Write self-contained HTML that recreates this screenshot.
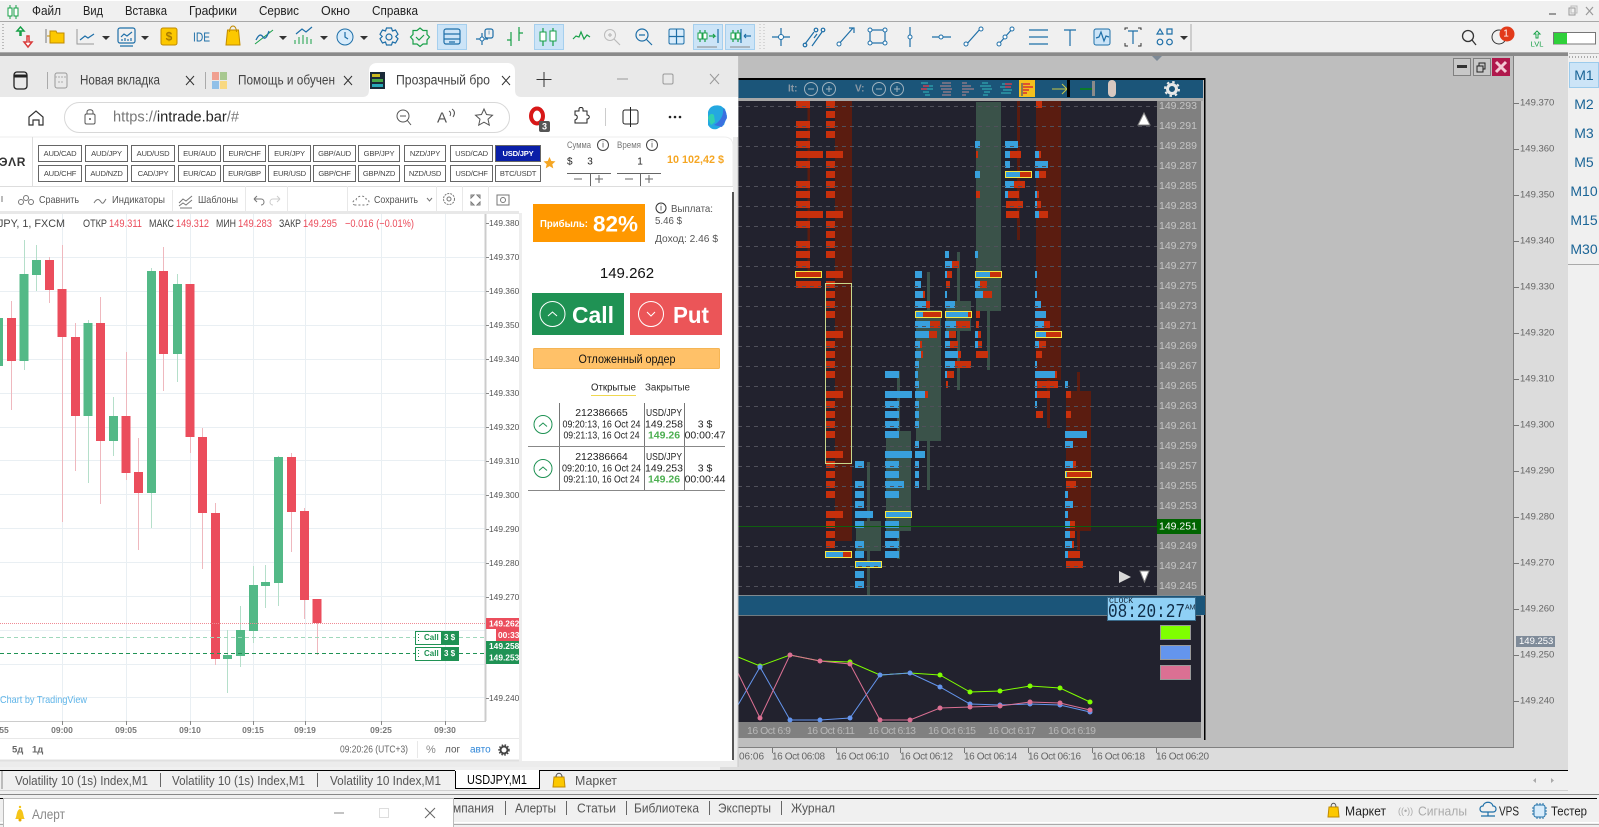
<!DOCTYPE html>
<html><head><meta charset="utf-8"><title>Chart</title>
<style>
html,body{margin:0;padding:0;width:1599px;height:827px;overflow:hidden;background:#f0f0f0}
svg{display:block;position:absolute;left:0;top:0}
text{font-family:"Liberation Sans",sans-serif;dominant-baseline:central}
.m{font-size:12.5px;fill:#222}
.pr{font-size:10.5px;fill:#c4c4c4}
.ax{font-size:9.5px;fill:#666}
.axt{font-size:8.4px;fill:#555}
.dt{font-size:10px;fill:#666}
.bd{font-size:10.5px;fill:#b8b8b8}
.tb{font-size:13px;fill:#555}
.p{font-size:7.6px;fill:#444;text-anchor:middle;letter-spacing:-.2px}
.tv{font-size:10.5px;fill:#555}
.lg{font-size:11px;fill:#444}
.lr{font-size:11px;fill:#eb4d5c}
.tp{font-size:9.5px;fill:#666}
.tm{font-size:8.5px;fill:#777;text-anchor:middle;font-weight:bold}
.tt{font-size:10.5px;fill:#222;text-anchor:middle}
.i{fill:none;stroke:#1e6fa8;stroke-width:1.2}
.g{fill:none;stroke:#18a048;stroke-width:1.2}
</style></head><body>
<svg width="1599" height="827" viewBox="0 0 1599 827">
<rect width="1599" height="827" fill="#f0f0f0"/>
<!-- menu -->
<rect y="21" width="1599" height="1" fill="#a8a8a8"/>
<rect y="0" width="1599" height="1" fill="#fff"/>
<path d="M10 5v14M16 5v14" stroke="#18a048" stroke-width="1" fill="none"/><rect x="8" y="8" width="4" height="8" fill="#fff" stroke="#18a048"/><rect x="14" y="8" width="4" height="8" fill="#fff" stroke="#18a048"/>
<text class="m" x="32" y="11" textLength="29" lengthAdjust="spacingAndGlyphs">Файл</text>
<text class="m" x="83" y="11" textLength="20" lengthAdjust="spacingAndGlyphs">Вид</text>
<text class="m" x="125" y="11" textLength="42" lengthAdjust="spacingAndGlyphs">Вставка</text>
<text class="m" x="189" y="11" textLength="48" lengthAdjust="spacingAndGlyphs">Графики</text>
<text class="m" x="259" y="11" textLength="40" lengthAdjust="spacingAndGlyphs">Сервис</text>
<text class="m" x="321" y="11" textLength="29" lengthAdjust="spacingAndGlyphs">Окно</text>
<text class="m" x="372" y="11" textLength="46" lengthAdjust="spacingAndGlyphs">Справка</text>
<path d="M1549 14h7" stroke="#999" stroke-width="2"/><rect x="1569" y="8" width="6" height="7" fill="none" stroke="#999"/><rect x="1571" y="6" width="6" height="7" fill="none" stroke="#bbb"/><path d="M1586 7l7 8M1593 7l-7 8" stroke="#999" stroke-width="1.2"/>
<!-- toolbar -->
<rect y="52" width="1568" height="1" fill="#aaa"/>
<rect y="53" width="1568" height="3" fill="#8a8a8a"/>
<path d="M3 24v26" stroke="#bbb" stroke-dasharray="1 2" stroke-width="2"/>
<g fill="#cce4f7" stroke="#a5cfee"><rect x="437.5" y="24.5" width="29" height="25"/><rect x="534.5" y="24.5" width="29" height="25"/><rect x="693.5" y="24.5" width="29" height="25"/><rect x="725.5" y="24.5" width="29" height="25"/></g>
<path d="M20 36v-5h-3l3.5-4 3.5 4h-3v5" fill="#fff" stroke="#18a048" stroke-width="1.5"/><path d="M27 36v6h-3l4 5 4-5h-3v-6z" fill="#fff" stroke="#d93a3a" stroke-width="1.5"/>
<path d="M46 29v14" stroke="#777"/><path d="M47 36h3M50 31h6l1 2h7v10H50z" fill="#fcc800" stroke="#c08a00"/>
<path d="M77 29v15h17" fill="none" stroke="#999"/><path d="M80 40l5-4 3 2 6-4" class="i"/><path d="M102 36h8l-4 4z" fill="#333"/>
<rect x="118" y="28" width="17" height="15" rx="2" class="i"/><path d="M121 37l3-3 3 2 5-4M122 41v-2M125 41v-3M128 41v-2M131 41v-3M120 46h13" class="i" stroke-width="1"/><path d="M141 36h8l-4 4z" fill="#333"/>
<rect x="161" y="28" width="16" height="17" rx="2" fill="#fcc800" stroke="#c08a00"/><text x="169" y="36.5" font-size="12" font-weight="bold" fill="#a87a00" text-anchor="middle">$</text>
<text x="193" y="37" font-size="13" fill="#1e6fa8" textLength="17" lengthAdjust="spacingAndGlyphs">IDE</text>
<path d="M226 45l1.5-15h11l1.5 15z" fill="#fcc800" stroke="#c08a00"/><path d="M229.5 32c0-8 7-8 7 0" fill="none" stroke="#c08a00"/>
<path d="M255 44l18-14" stroke="#18a048"/><path d="M256 40c3-6 5-6 7-3s4 0 6-6" fill="none" stroke="#1e6fa8" stroke-width="1.3"/><path d="M279 36h8l-4 4z" fill="#333"/>
<path d="M295 44v-4M299 44v-7M303 44v-9M307 44v-7M311 44v-5" stroke="#18a048" fill="none"/><path d="M296 34l6-5 4 3 6-5" class="i"/><path d="M320 36h8l-4 4z" fill="#333"/>
<circle cx="345" cy="37" r="8" fill="#d8ecfb" stroke="#1e6fa8"/><path d="M345 32v5l3 2" class="i" stroke-width="1"/><path d="M360 36h8l-4 4z" fill="#333"/>
<path d="M386.5 28h5l1 3 3-1 2.5 4.300-2.200 2.200 2.200 2.200-2.500 4.300-3-1-1 3h-5l-1-3-3 1-2.500-4.300 2.200-2.200-2.200-2.200 2.500-4.300 3 1z" class="i"/><circle cx="389" cy="37" r="3" class="i"/>
<path d="M420 28l3 2.5h4v4l2.5 2.5-2.500 3v4h-4l-3 2.500-3-2.500h-4v-4l-2.500-3 2.500-2.500v-4h4z" class="g"/><path d="M416 37l3 3 5-5" class="g"/>
<rect x="444" y="29" width="16" height="15" rx="2" class="i"/><path d="M444 34h16M444 39h16M449 42h6" class="i"/>
<path d="M482 33v12M476 39h12" class="i" stroke-width="1.3"/><circle cx="482" cy="39" r="2" fill="#fff" stroke="#1e6fa8"/><rect x="485" y="29" width="8" height="9" rx="2" class="i"/><text x="489" y="33" font-size="7" fill="#1e6fa8" text-anchor="middle">i</text>
<path d="M511 32v14M507 40h4M519 27v14M519 33h4" class="g"/>
<path d="M543 28v18M553 28v18" class="g"/><rect x="540" y="32" width="6" height="9" fill="#fff" stroke="#18a048"/><rect x="550" y="31" width="6" height="10" fill="#fff" stroke="#18a048"/>
<path d="M573 39l3-3 3 1 2-5 3 7 3-4 3 2" class="g"/>
<circle cx="610" cy="35" r="5.5" fill="none" stroke="#bbb"/><path d="M608 35h4M610 33v4M614 39l6 6" stroke="#bbb" fill="none" stroke-width="1.2"/>
<circle cx="642" cy="35" r="6" class="i"/><path d="M639 35h6M646 39l6 6" class="i"/>
<rect x="669" y="29" width="15" height="15" rx="1.5" fill="#d8ecfb" stroke="#1e6fa8"/><path d="M676.5 29v15M669 36.5h15" class="i"/>
<path d="M700 30v12M705 30v12" class="g"/><rect x="698" y="33" width="4" height="6" fill="#fff" stroke="#18a048"/><rect x="703" y="33" width="4" height="6" fill="#fff" stroke="#18a048"/><path d="M709 36h6l-2-2M715 36l-2 2" class="g"/><path d="M718 29v14" class="i"/><path d="M697 47h20" stroke="#888" fill="none"/>
<path d="M733 30v12M738 30v12" class="g"/><rect x="731" y="33" width="4" height="6" fill="#fff" stroke="#18a048"/><rect x="736" y="33" width="4" height="6" fill="#fff" stroke="#18a048"/><path d="M741 29v14" class="i"/><path d="M744 36h7M744 36l2-2M744 36l2 2" class="i"/><path d="M730 47h20" stroke="#888" fill="none"/>
<path d="M760 24v27M764 24v27" stroke="#bbb" fill="none" stroke-dasharray="1 2"/>
<path d="M781 28v18M772 37h18" class="i"/><circle cx="781" cy="37" r="2.5" fill="#fff" stroke="#1e6fa8"/>
<path d="M805 44l9-12M812 46l10-14M814 38l3-4" class="i"/><circle cx="816" cy="30" r="1.8" class="i"/><circle cx="823" cy="30" r="1.800" class="i"/><circle cx="805" cy="45" r="1.800" class="i"/>
<path d="M838 45l15-17M849 28h5v5" class="i"/><circle cx="839" cy="44" r="2" fill="#fff" stroke="#1e6fa8"/>
<rect x="870" y="30" width="15" height="13" class="i"/><g fill="#fff" stroke="#1e6fa8"><circle cx="870" cy="30" r="2"/><circle cx="885" cy="30" r="2"/><circle cx="870" cy="43" r="2"/><circle cx="885" cy="43" r="2"/></g>
<path d="M910 27v20" class="i"/><circle cx="910" cy="37" r="2" fill="#fff" stroke="#1e6fa8"/>
<path d="M932 37h19" class="i"/><circle cx="941" cy="37" r="2" fill="#fff" stroke="#1e6fa8"/>
<path d="M965 46l16-18" class="i"/><circle cx="981" cy="29" r="2" fill="#fff" stroke="#1e6fa8"/><circle cx="966" cy="44" r="2" fill="#fff" stroke="#1e6fa8"/>
<path d="M998 45l15-17" class="i"/><circle cx="1012" cy="29" r="2" fill="#fff" stroke="#1e6fa8"/><circle cx="1005" cy="37" r="2" fill="#fff" stroke="#1e6fa8"/><circle cx="999" cy="44" r="2" fill="#fff" stroke="#1e6fa8"/>
<path d="M1029 30h19M1029 37h19M1029 44h19" class="i"/>
<path d="M1064 30h12M1070 30v16" class="i"/>
<rect x="1094" y="29" width="16" height="16" rx="2" fill="#cce4f7" stroke="#1e6fa8"/><path d="M1096 38l3-1 2-5 3 9 2-5 3 1" class="i"/>
<path d="M1125 30v-2h3M1138 28h3v2M1125 43v3h3M1138 46h3v-3" stroke="#333" fill="none"/><path d="M1128 31h10M1133 31v13" class="i"/>
<path d="M1157 34l3-5 3 5zM1167 29h5v5h-5z" class="i" fill="none"/><circle cx="1160" cy="42" r="2.8" class="i"/><circle cx="1169.5" cy="42" r="2.8" class="i"/><path d="M1180 36h8l-4 4z" fill="#333"/>
<path d="M1191 24v27" stroke="#aaa"/>
<circle cx="1468" cy="36" r="5.5" fill="none" stroke="#333" stroke-width="1.3"/><path d="M1472 40l4 5" stroke="#333" stroke-width="1.3"/>
<circle cx="1499" cy="37" r="7" fill="none" stroke="#333"/><circle cx="1507" cy="34" r="7.5" fill="#e23a1a"/><text x="1506" y="34" font-size="10" fill="#fff" text-anchor="middle">1</text>
<path d="M1537 31l-3 3h2v4h2v-4h2z" fill="#fff" stroke="#18a048"/><text x="1537" y="44" font-size="7.5" fill="#18a048" text-anchor="middle">LVL</text>
<rect x="1553.5" y="32.5" width="42" height="11.5" fill="#fff" stroke="#777"/><rect x="1554" y="33" width="13" height="11" fill="#2fd03a"/>
<!-- right panel -->
<rect x="1568" y="53" width="31" height="212" fill="#f0f0f0"/><path d="M1569 53.5h30" stroke="#bbb"/><path d="M1569 57h30" stroke="#aaa" stroke-dasharray="1 2" stroke-width="2"/>
<rect x="1569.5" y="62.5" width="29" height="25" fill="#cce4f7" stroke="#9ccbec"/>
<g font-size="14" fill="#1a6496" text-anchor="middle"><text x="1584" y="75">M1</text><text x="1584" y="104">M2</text><text x="1584" y="133">M3</text><text x="1584" y="162">M5</text><text x="1584" y="191">M10</text><text x="1584" y="220">M15</text><text x="1584" y="249">M30</text></g>
<path d="M1568 264.5h31" stroke="#aaa"/>
<!-- MDI -->
<rect x="720" y="56" width="848" height="714" fill="#dcdcdc"/>
<rect x="720" y="56" width="793" height="691" fill="#bebebe"/>
<path d="M720 747.5h794M1513.5 56v692" stroke="#808080" fill="none"/>
<path d="M1152 56h10l-5 5z" fill="#7d8a97"/>
<rect x="1453.5" y="58.5" width="17" height="17" fill="#c8c8c8" stroke="#808080"/><rect x="1457" y="65" width="10" height="3" fill="#333"/>
<rect x="1473.5" y="58.5" width="17" height="17" fill="#c8c8c8" stroke="#808080"/><rect x="1479" y="63" width="6" height="6" fill="none" stroke="#222"/><rect x="1477" y="66" width="6" height="6" fill="#c8c8c8" stroke="#222"/>
<rect x="1492" y="58" width="18" height="18" fill="#b0184c"/><path d="M1496 62l10 10M1506 62l-10 10" stroke="#f3c9d5" stroke-width="3"/>
<path d="M1514 103.500h5M1514 149.500h5M1514 195.500h5M1514 241.500h5M1514 287.500h5M1514 333.500h5M1514 379.500h5M1514 425.500h5M1514 471.500h5M1514 517.500h5M1514 563.500h5M1514 609.500h5M1514 655.500h5M1514 701.500h5" stroke="#777" fill="none"/>
<text class="ax" x="1520" y="103">149.370</text><text class="ax" x="1520" y="149">149.360</text><text class="ax" x="1520" y="195">149.350</text><text class="ax" x="1520" y="241">149.340</text><text class="ax" x="1520" y="287">149.330</text><text class="ax" x="1520" y="333">149.320</text><text class="ax" x="1520" y="379">149.310</text><text class="ax" x="1520" y="425">149.300</text><text class="ax" x="1520" y="471">149.290</text><text class="ax" x="1520" y="517">149.280</text><text class="ax" x="1520" y="563">149.270</text><text class="ax" x="1520" y="609">149.260</text><text class="ax" x="1520" y="701">149.240</text><text class="ax" x="1520" y="655">149.250</text>
<rect x="1516" y="636" width="39" height="11" fill="#7f8b99"/><text x="1519" y="641.5" font-size="9.5" fill="#fff">149.253</text>
<path d="M772.5 748v5M836.5 748v5M900.5 748v5M964.5 748v5M1028.5 748v5M1092.5 748v5M1156.5 748v5" stroke="#777"/>
<text class="dt" x="739" y="757">06:06</text><text class="dt" x="772" y="757" textLength="53">16 Oct 06:08</text><text class="dt" x="836" y="757" textLength="53">16 Oct 06:10</text><text class="dt" x="900" y="757" textLength="53">16 Oct 06:12</text><text class="dt" x="964" y="757" textLength="53">16 Oct 06:14</text><text class="dt" x="1028" y="757" textLength="53">16 Oct 06:16</text><text class="dt" x="1092" y="757" textLength="53">16 Oct 06:18</text><text class="dt" x="1156" y="757" textLength="53">16 Oct 06:20</text>
<!-- dark chart -->
<rect x="738" y="78" width="467" height="2" fill="#000"/>
<rect x="1204" y="78" width="1.5" height="662" fill="#000"/>
<rect x="738" y="80" width="465" height="18" fill="#1b5579"/>
<rect x="738" y="98" width="465" height="3" fill="#a8a8a8"/>
<rect x="738" y="101" width="463" height="494" fill="#22222e"/>
<rect x="1157" y="101" width="44" height="494" fill="#808080"/>
<!-- candles -->
<g fill="#5a1c10"><rect x="807.5" y="101" width="2.5" height="170"/><rect x="835" y="101" width="17" height="440"/><rect x="1017" y="101" width="3" height="139"/><rect x="1036" y="101" width="25" height="279"/><rect x="1047" y="380" width="3" height="48"/><rect x="1066" y="391" width="25" height="140"/><rect x="1077" y="372" width="3" height="178"/></g>
<g fill="#3a5249"><rect x="856" y="521" width="25" height="30"/><rect x="867" y="462" width="3" height="133"/><rect x="886" y="431" width="25" height="100"/><rect x="897" y="371" width="3" height="188"/><rect x="916" y="310" width="25" height="131"/><rect x="927" y="272" width="3" height="218"/><rect x="946" y="301" width="25" height="30"/><rect x="957" y="252" width="3" height="138"/><rect x="976" y="102" width="25" height="209"/><rect x="987" y="311" width="3" height="59"/></g>
<!-- red cells -->
<path fill="none" stroke="#c8300c" stroke-width="7" d="M796 104.5h14M796 124.5h14M796 134.5h14M796 144.5h14M796 154.5h27M796 164.5h14M796 184.5h14M796 194.5h14M796 204.5h14M796 214.5h27M796 224.5h14M796 244.5h14M796 254.5h14M796 264.5h14M796 274.5h26M796 284.5h25
M826 104.5h9M826 114.5h9M826 124.5h9M826 134.5h9M826 154.5h17M826 164.5h9M826 174.5h9M826 184.5h9M826 194.5h9M826 214.5h17M826 224.5h9M826 234.5h9M826 244.5h9M826 254.5h9M826 274.5h17M826 284.5h9M826 294.5h9M826 304.5h9M826 314.5h9M826 334.5h17M826 344.5h9M826 354.5h9M826 364.5h9M826 374.5h9M826 394.5h17M826 404.5h9M826 414.5h9M826 424.5h9M826 434.5h9M826 454.5h17M826 464.5h9M826 474.5h9M826 484.5h9M826 494.5h9M826 514.5h17M826 524.5h9M826 534.5h9M826 544.5h9M843 554.5h9
M923 294.5h2M926 304.5h4M923 314.5h18M930 324.5h10M929 334.5h8M920 344.5h2M921 354.5h2M925 394.5h3
M952 264.5h7M947 274.5h5M946 284.5h4M968 314.5h3M956 324.5h14M949 334.5h7M950 344.5h8M958 354.5h3M955 364.5h16M947 374.5h7M946 384.5h2
M976 154.5h2M976 194.5h4M990 274.5h11M980 284.5h7M983 294.5h9M976 314.5h4M976 324.5h3M978 334.5h3M978 344.5h4M976 354.5h12
M1010 154.5h11M1020 174.5h11M1014 184.5h11M1008 194.5h11M1006 204.5h17M1006 214.5h13
M1036 104.5h6M1039 154.5h2M1039 174.5h7M1037 194.5h2M1037 204.5h4M1039 214.5h9M1044 324.5h6M1046 334.5h15M1039 344.5h7M1036 354.5h6M1055 374.5h2M1037 384.5h21M1037 394.5h13M1036 414.5h7
M1066 394.5h5M1066 414.5h5M1073 464.5h3M1067 474.5h24M1066 484.5h10M1070 524.5h5M1070 534.5h5M1072 544.5h2M1068 554.5h12M1066 564.5h17"/>
<!-- blue cells -->
<path fill="none" stroke="#38a0dd" stroke-width="7" d="M826 554.5h17
M855 464.5h9M855 484.5h9M855 494.5h9M855 504.5h9M855 514.5h18M855 524.5h9M855 544.5h9M855 554.5h9M855 564.5h26M855 574.5h9M855 584.5h9
M885 374.5h14M885 394.5h27M885 404.5h14M885 414.5h14M885 424.5h14M885 434.5h14M885 454.5h27M885 464.5h14M885 474.5h14M885 484.5h19M885 494.5h14M885 514.5h26M885 524.5h14M885 534.5h14M885 544.5h14M885 554.5h14
M915 274.5h7M915 284.5h6M915 294.5h8M915 304.5h11M915 314.5h8M915 324.5h15M915 334.5h14M915 344.5h5M915 354.5h6M915 364.5h4M915 374.5h3M915 384.5h4M915 394.5h10M915 404.5h4M915 414.5h4M915 424.5h4M915 444.5h4M915 454.5h10M915 464.5h4M915 474.5h4M915 484.5h4
M945 254.5h4M945 264.5h7M945 274.5h2M945 294.5h2M945 304.5h10M945 314.5h23M945 324.5h11M945 334.5h4M945 344.5h5M945 354.5h13M945 364.5h10M945 374.5h2
M975 144.5h5M975 174.5h5M975 254.5h3M975 274.5h15M975 284.5h5M975 294.5h8M975 334.5h3M975 344.5h3
M1005 144.5h13M1005 154.5h5M1005 164.5h5M1005 174.5h15M1005 184.5h9M1005 194.5h3
M1035 154.5h4M1035 164.5h13M1035 174.5h4M1035 194.5h2M1035 204.5h2M1035 214.5h4M1035 274.5h2M1035 294.5h2M1035 304.5h6M1035 314.5h11M1035 324.5h9M1035 334.5h11M1035 344.5h4M1035 364.5h2M1035 374.5h20M1035 384.5h2M1035 394.5h2M1035 404.5h2
M1065 384.5h3M1065 434.5h22M1065 444.5h8M1065 464.5h8M1065 474.5h2M1065 494.5h3M1065 504.5h8M1065 514.5h3M1065 524.5h5M1065 534.5h5M1065 544.5h7M1065 554.5h3"/>
<!-- dashed -->
<path fill="none" stroke="#50505a" stroke-dasharray="4 4" d="M738 106.5h419M738 126.5h419M738 146.5h419M738 166.5h419M738 186.5h419M738 206.5h419M738 226.5h419M738 246.5h419M738 266.5h419M738 286.5h419M738 306.5h419M738 326.5h419M738 346.5h419M738 366.5h419M738 386.5h419M738 406.5h419M738 426.5h419M738 446.5h419M738 466.5h419M738 486.5h419M738 506.5h419M738 546.5h419M738 566.5h419M738 586.5h419"/>
<path d="M738 526.5h419" stroke="#0f5e0f"/>
<!-- yellow boxes -->
<g fill="none" stroke="#f5e642"><rect x="795.5" y="271.5" width="26" height="6"/><rect x="825.5" y="551.5" width="26" height="6"/><rect x="855.5" y="561.5" width="26" height="6"/><rect x="885.5" y="511.5" width="26" height="6"/><rect x="915.5" y="311.5" width="26" height="6"/><rect x="945.5" y="311.5" width="26" height="6"/><rect x="975.5" y="271.5" width="26" height="6"/><rect x="1005.5" y="171.5" width="26" height="6"/><rect x="1035.5" y="331.5" width="26" height="6"/><rect x="1065.5" y="471.5" width="26" height="6"/></g>
<rect x="825.5" y="283.5" width="26" height="180" fill="none" stroke="#c8d88c"/>
<!-- price col -->
<text class="pr" x="1159" y="106">149.293</text><text class="pr" x="1159" y="126">149.291</text><text class="pr" x="1159" y="146">149.289</text><text class="pr" x="1159" y="166">149.287</text><text class="pr" x="1159" y="186">149.285</text><text class="pr" x="1159" y="206">149.283</text><text class="pr" x="1159" y="226">149.281</text><text class="pr" x="1159" y="246">149.279</text><text class="pr" x="1159" y="266">149.277</text><text class="pr" x="1159" y="286">149.275</text><text class="pr" x="1159" y="306">149.273</text><text class="pr" x="1159" y="326">149.271</text><text class="pr" x="1159" y="346">149.269</text><text class="pr" x="1159" y="366">149.267</text><text class="pr" x="1159" y="386">149.265</text><text class="pr" x="1159" y="406">149.263</text><text class="pr" x="1159" y="426">149.261</text><text class="pr" x="1159" y="446">149.259</text><text class="pr" x="1159" y="466">149.257</text><text class="pr" x="1159" y="486">149.255</text><text class="pr" x="1159" y="506">149.253</text><text class="pr" x="1159" y="546">149.249</text><text class="pr" x="1159" y="566">149.247</text><text class="pr" x="1159" y="586">149.245</text>
<rect x="1157" y="519" width="44" height="15" fill="#006400"/><text x="1159" y="526.5" font-size="10.5" fill="#fff">149.251</text>
<path d="M1144 113l6 12h-12z" fill="#fff" stroke="#888"/><path d="M1119 571l12 6-12 6z" fill="#d8d8d8"/><path d="M1140 571h9l-4.500 11z" fill="#fff" stroke="#888"/>
<!-- chart header -->
<text x="788" y="89" font-size="10" font-weight="bold" fill="#8a98a4">It:</text>
<g fill="none" stroke="#9fb2bf"><circle cx="811" cy="89" r="6.5"/><circle cx="829" cy="89" r="6.5"/><circle cx="879" cy="89" r="6.5"/><circle cx="897" cy="89" r="6.5"/><path d="M808 89h6M826 89h6M829 86v6M876 89h6M894 89h6M897 86v6"/></g>
<text x="855" y="89" font-size="10" font-weight="bold" fill="#8a98a4">V:</text>
<rect x="1019" y="80" width="16" height="17" fill="#f4c01e"/>
<g stroke-width="1.5" fill="none"><path d="M921 83h7M923 86h10M921 89h12M923 92h6M925 95h5" stroke="#2c9aa8"/><path d="M923 86h6M921 89h6" stroke="#c8364c"/><path d="M942 83h9M940 86h11M941 89h11M943 92h8M942 95h9" stroke="#8a7a88"/><path d="M962 83h5M962 86h9M962 89h12M962 92h7M962 95h4" stroke="#8a7a88"/><path d="M982 83h6M980 86h11M982 89h10M984 92h6M983 95h5" stroke="#2c9aa8"/><path d="M1002 84h9M1000 87h11M1003 90h9M1001 93h10" stroke="#2c9aa8"/><path d="M1005 84h7M1005 87h6" stroke="#c8364c"/><path d="M1022 83v13" stroke="#666"/><path d="M1023 84h7M1023 87h10M1023 90h6M1023 93h4" stroke="#d83030"/></g>
<path d="M1052 89h15M1062 84l5 5-5 5" fill="none" stroke="#c8c848"/><rect x="1067" y="80" width="3" height="17" fill="#000"/>
<path d="M1080 89h12" stroke="#0a7a2a" stroke-width="2"/><rect x="1092" y="81" width="3" height="15" fill="#8a8a8a"/>
<rect x="1108" y="80" width="8" height="17" rx="4" fill="#d8c8c0"/>
<circle cx="1172" cy="89" r="4.5" fill="none" stroke="#e8e8e8" stroke-width="3"/><circle cx="1172" cy="89" r="7" fill="none" stroke="#e8e8e8" stroke-width="2" stroke-dasharray="2.500 3"/>
<!-- lower panels -->
<rect x="738" y="595" width="467" height="1" fill="#808a90"/>
<rect x="738" y="596" width="467" height="19" fill="#1b5579"/>
<rect x="738" y="615" width="463" height="1" fill="#707a80"/>
<rect x="738" y="616" width="463" height="106" fill="#22222e"/>
<rect x="738" y="722" width="463" height="16" fill="#808080"/>
<rect x="1107.5" y="597.5" width="88" height="23" fill="#8fd0f5" stroke="#3a6a8a"/>
<text x="1109" y="601.5" font-size="8" fill="#123" style="font-family:'Liberation Mono',monospace">CLOCK</text>
<text x="1108" y="612" font-size="19" fill="#0e2a44" textLength="77" lengthAdjust="spacingAndGlyphs" style="font-family:'Liberation Mono',monospace">08:20:27</text>
<text x="1185" y="608" font-size="7" fill="#123">AM</text>
<g stroke="#999"><rect x="1160.5" y="625.5" width="30" height="14" fill="#7fff00"/><rect x="1160.5" y="645.5" width="30" height="14" fill="#6495ed"/><rect x="1160.5" y="665.5" width="30" height="14" fill="#db7093"/></g>
<polyline fill="none" stroke="#7fff00" points="738,657 760,666 790,655 820,661 850,662 880,675 910,673 940,675 970,692 1000,691 1030,686 1060,688 1090,702"/>
<polyline fill="none" stroke="#6495ed" points="738,705 760,667 790,720 820,720 850,718 880,675 910,673 940,687 970,704 1000,705 1030,704 1060,705 1090,712"/>
<polyline fill="none" stroke="#db7093" points="738,673 760,718 790,655 820,661 850,664 880,720 910,720 940,708 970,707 1000,706 1030,702 1060,703 1090,710"/>
<g fill="#7fff00"><circle cx="760" cy="666" r="2.5"/><circle cx="850" cy="662" r="2.5"/><circle cx="940" cy="675" r="2.5"/><circle cx="970" cy="692" r="2.5"/><circle cx="1000" cy="691" r="2.5"/><circle cx="1030" cy="686" r="2.5"/><circle cx="1060" cy="688" r="2.5"/><circle cx="1090" cy="702" r="2.5"/></g>
<g fill="#6495ed"><circle cx="760" cy="667" r="2.5"/><circle cx="790" cy="720" r="2.5"/><circle cx="820" cy="720" r="2.5"/><circle cx="850" cy="718" r="2.5"/><circle cx="880" cy="675" r="2.5"/><circle cx="910" cy="673" r="2.5"/><circle cx="940" cy="687" r="2.5"/><circle cx="970" cy="704" r="2.5"/><circle cx="1000" cy="705" r="2.5"/><circle cx="1030" cy="704" r="2.5"/><circle cx="1060" cy="705" r="2.5"/><circle cx="1090" cy="712" r="2.5"/></g>
<g fill="#db7093"><circle cx="760" cy="718" r="2.5"/><circle cx="790" cy="655" r="2.5"/><circle cx="820" cy="661" r="2.5"/><circle cx="850" cy="664" r="2.5"/><circle cx="880" cy="720" r="2.5"/><circle cx="910" cy="720" r="2.5"/><circle cx="940" cy="708" r="2.5"/><circle cx="970" cy="707" r="2.5"/><circle cx="1000" cy="706" r="2.5"/><circle cx="1030" cy="702" r="2.5"/><circle cx="1060" cy="703" r="2.5"/><circle cx="1090" cy="710" r="2.5"/></g>
<text class="bd" x="747" y="731" textLength="44">16 Oct 6:9</text><text class="bd" x="807" y="731" textLength="48">16 Oct 6:11</text><text class="bd" x="868" y="731" textLength="48">16 Oct 6:13</text><text class="bd" x="928" y="731" textLength="48">16 Oct 6:15</text><text class="bd" x="988" y="731" textLength="48">16 Oct 6:17</text><text class="bd" x="1048" y="731" textLength="48">16 Oct 6:19</text>
<!-- bottom tabs -->
<rect y="770" width="1568" height="1.5" fill="#000"/>
<rect y="771" width="1568" height="19" fill="#f0f0f0"/>
<rect y="790" width="1568" height="1" fill="#d0d0d0"/>
<path d="M2 771v18" stroke="#888"/>
<rect x="455" y="770" width="84" height="18" fill="#fff"/><path d="M455.5 770v18.5h84V770" fill="none" stroke="#000"/>
<rect x="455" y="770" width="84" height="1" fill="#fff"/>
<text class="tb" x="15" y="780.5" textLength="133" lengthAdjust="spacingAndGlyphs">Volatility 10 (1s) Index,M1</text>
<path d="M160.5 773v14M317.5 773v14" stroke="#666"/>
<text class="tb" x="172" y="780.5" textLength="133" lengthAdjust="spacingAndGlyphs">Volatility 10 (1s) Index,M1</text>
<text class="tb" x="330" y="780.5" textLength="111" lengthAdjust="spacingAndGlyphs">Volatility 10 Index,M1</text>
<text x="467" y="779.5" font-size="13" fill="#000" textLength="60" lengthAdjust="spacingAndGlyphs">USDJPY,M1</text>
<path d="M553 787l1-10h10l1 10z" fill="#fcc800" stroke="#c08a00"/><path d="M556 777c0-5 6-5 6 0" fill="none" stroke="#555"/>
<text class="tb" x="575" y="780.5" textLength="42" lengthAdjust="spacingAndGlyphs">Маркет</text>
<path d="M1536 778l-3 2.5 3 2.5zM1551 778l3 2.5-3 2.5z" fill="#aaa"/>
<rect y="794" width="1599" height="1" fill="#888"/>
<rect y="798" width="1597" height="1" fill="#000"/>
<rect y="799" width="1597" height="23" fill="#f0f0f0"/>
<rect y="822" width="1599" height="1" fill="#fff"/>
<rect y="824" width="1599" height="1" fill="#aaa"/>
<text class="tb" x="453" y="808" textLength="41" lengthAdjust="spacingAndGlyphs">мпания</text>
<path d="M505.5 801v14" stroke="#666"/>
<text class="tb" x="515" y="808" textLength="41" lengthAdjust="spacingAndGlyphs">Алерты</text>
<path d="M566.5 801v14" stroke="#666"/>
<text class="tb" x="577" y="808" textLength="39" lengthAdjust="spacingAndGlyphs">Статьи</text>
<path d="M626.5 801v14" stroke="#666"/>
<text class="tb" x="634" y="808" textLength="65" lengthAdjust="spacingAndGlyphs">Библиотека</text>
<path d="M709.5 801v14" stroke="#666"/>
<text class="tb" x="718" y="808" textLength="53" lengthAdjust="spacingAndGlyphs">Эксперты</text>
<path d="M781.5 801v14" stroke="#666"/>
<text class="tb" x="791" y="808" textLength="44" lengthAdjust="spacingAndGlyphs">Журнал</text>
<path d="M1328 817l1-10h9l1 10z" fill="#fcc800" stroke="#c08a00"/><path d="M1331 807c0-5 5-5 5 0" fill="none" stroke="#555"/>
<text x="1345" y="811" font-size="13" fill="#222" textLength="41" lengthAdjust="spacingAndGlyphs">Маркет</text>
<text x="1398" y="811" font-size="9" fill="#aaa">((•))</text>
<text x="1418" y="811" font-size="13" fill="#aaa" textLength="49" lengthAdjust="spacingAndGlyphs">Сигналы</text>
<path d="M1483 812c-4 0-4-6 0-6 1-5 9-5 10 0 4 0 4 6 0 6zM1488 812v4M1481 816h14" class="i"/>
<text x="1499" y="811" font-size="13" fill="#222" textLength="20" lengthAdjust="spacingAndGlyphs">VPS</text>
<rect x="1534" y="805" width="11" height="12" rx="2" fill="#d8ecfb" stroke="#1e6fa8"/><path d="M1532 808h2M1532 811h2M1532 814h2M1545 808h2M1545 811h2M1545 814h2M1537 803v2M1540 803v2M1543 803v2M1537 817v2M1540 817v2M1543 817v2" stroke="#1e6fa8" fill="none"/>
<text x="1551" y="811" font-size="13" fill="#222" textLength="36" lengthAdjust="spacingAndGlyphs">Тестер</text>
<!-- browser window -->
<rect x="0" y="56" width="738" height="711" fill="#ececec"/>
<path d="M738 56v711" stroke="#c8c8c8"/>
<rect x="0" y="56" width="738" height="41" fill="#e9e9e9"/>
<path d="M362 97c6 0 7-3 7-8V71c0-5 3-8 8-8h130c5 0 8 3 8 8v18c0 5 1 8 7 8z" fill="#fff"/>
<rect x="0" y="97" width="738" height="40" fill="#fff"/>
<rect x="0" y="137" width="733" height="624" fill="#fff"/>
<rect x="14" y="72" width="13" height="17" rx="3" fill="none" stroke="#222" stroke-width="1.3"/><path d="M14 76h13" stroke="#222" stroke-width="3"/>
<path d="M47.5 72v17M205.5 72v17" stroke="#aaa"/>
<rect x="55" y="73" width="12" height="15" rx="2" fill="none" stroke="#999"/><path d="M55 77h12M58 82h6" stroke="#aaa" stroke-dasharray="2 1" fill="none"/>
<g font-size="13.5" fill="#444"><text x="80" y="80" textLength="80" lengthAdjust="spacingAndGlyphs">Новая вкладка</text><text x="238" y="80" textLength="97" lengthAdjust="spacingAndGlyphs">Помощь и обучен</text><text x="396" y="80" textLength="94" lengthAdjust="spacingAndGlyphs">Прозрачный бро</text></g>
<path d="M186 76l8 9M194 76l-8 9M344 76l8 9M352 76l-8 9M502 76l8 9M510 76l-8 9" stroke="#333" fill="none"/>
<rect x="212" y="72" width="7" height="8" fill="#f0a090"/><rect x="220" y="72" width="7" height="8" fill="#a8c890"/><rect x="212" y="81" width="7" height="8" fill="#90c0e8"/><rect x="220" y="81" width="7" height="8" fill="#f8d880"/>
<rect x="370" y="72" width="15" height="17" fill="#1a2a38"/><rect x="372" y="74" width="8" height="3" fill="#c8b820"/><rect x="372" y="79" width="11" height="3" fill="#48a848"/><rect x="372" y="84" width="11" height="3" fill="#28a8b8"/>
<path d="M544 72v15M536.5 79.5h15" stroke="#333" fill="none"/>
<path d="M617 79h11" stroke="#999"/><rect x="663" y="74" width="10" height="10" rx="1.5" fill="none" stroke="#999"/><path d="M710 74l9 10M719 74l-9 10" stroke="#999" fill="none"/>
<path d="M29 117l7-6 7 6v8h-4v-5h-6v5h-4z" fill="none" stroke="#333" stroke-width="1.2"/>
<rect x="64.5" y="102.5" width="445" height="30" rx="15" fill="#fff" stroke="#d8d8d8"/>
<rect x="85" y="114" width="10" height="10" rx="1.5" fill="none" stroke="#555"/><path d="M87 114v-2c0-3 6-3 6 0v2" fill="none" stroke="#555"/><circle cx="90" cy="119" r="1" fill="#555"/>
<text x="113" y="117.5" font-size="14.5" fill="#777" textLength="126" lengthAdjust="spacingAndGlyphs">https://<tspan fill="#222">intrade.bar</tspan>/#</text>
<circle cx="403" cy="116" r="6" fill="none" stroke="#555"/><path d="M400 116h6M407 120l4 5" stroke="#555" fill="none"/>
<text x="437" y="118" font-size="15" fill="#555">A</text><path d="M449 111c2 1 2 3 1 5M452 109c3 2 3 5 1 8" fill="none" stroke="#555"/>
<path d="M484 109l2.5 5.500 6 .7-4.500 4 1.300 6-5.300-3-5.300 3 1.300-6-4.500-4 6-.7z" fill="none" stroke="#555"/>
<ellipse cx="537" cy="116" rx="6" ry="7.5" fill="none" stroke="#d81818" stroke-width="4"/><rect x="539" y="121" width="11" height="11" rx="2" fill="#555"/><text x="544.5" y="126.5" font-size="9" fill="#fff" text-anchor="middle" font-weight="bold">3</text>
<path d="M575 111h4v-2c0-2 4-2 4 0v2h4v4c3 0 3 4 0 4v4h-12v-3c3-1 3-5 0-5z" fill="none" stroke="#222"/>
<path d="M605.5 108v18" stroke="#ccc"/>
<rect x="623" y="110" width="15" height="14" rx="2" fill="none" stroke="#222"/><path d="M630.5 107v20" stroke="#222"/><rect x="631" y="111" width="6" height="12" fill="#fff"/>
<g fill="#222"><circle cx="670" cy="117" r="1.3"/><circle cx="675" cy="117" r="1.3"/><circle cx="680" cy="117" r="1.3"/></g>
<path d="M708 112c2-8 10-7 13-6l4 3 2 7-3 9-7 4c-5 1-7-1-9-4z" fill="#24a8e0"/><path d="M714 125c5-3 10-8 9-17l3 4 1 6-5 9z" fill="#3a70e0"/><path d="M708 118c1-4 4-5 6-3l1 7-4 3z" fill="#30d0b0"/>
<path d="M0 137h724c6 0 9 3 9 9v40" fill="none" stroke="#eee"/>
<!-- toolbar content -->
<text x="-1" y="162" font-size="12" fill="#333" font-weight="bold" letter-spacing=".6">ЭΛR</text>
<path d="M32.5 137v49" stroke="#ddd"/>
<g fill="#fff" stroke="#666"><rect x="38.5" y="145.5" width="43" height="16"/><rect x="85.5" y="145.5" width="42" height="16"/><rect x="131.5" y="145.5" width="43" height="16"/><rect x="178.5" y="145.5" width="42" height="16"/><rect x="223.5" y="145.5" width="42" height="16"/><rect x="268.5" y="145.5" width="42" height="16"/><rect x="313.5" y="145.5" width="42" height="16"/><rect x="358.5" y="145.5" width="41" height="16"/><rect x="404.5" y="145.5" width="41" height="16"/><rect x="450.5" y="145.5" width="42" height="16"/><rect x="495.5" y="145.5" width="45" height="16" fill="#0a1fa8"/>
<rect x="38.5" y="165.5" width="43" height="16"/><rect x="85.5" y="165.5" width="42" height="16"/><rect x="131.5" y="165.5" width="43" height="16"/><rect x="178.5" y="165.5" width="42" height="16"/><rect x="223.5" y="165.5" width="42" height="16"/><rect x="268.5" y="165.5" width="42" height="16"/><rect x="313.5" y="165.5" width="42" height="16"/><rect x="358.5" y="165.5" width="41" height="16"/><rect x="404.5" y="165.5" width="41" height="16"/><rect x="450.5" y="165.5" width="42" height="16"/><rect x="495.5" y="165.5" width="45" height="16"/></g>
<text class="p" x="60" y="153.5">AUD/CAD</text><text class="p" x="106.5" y="153.5">AUD/JPY</text><text class="p" x="153" y="153.5">AUD/USD</text><text class="p" x="199.5" y="153.5">EUR/AUD</text><text class="p" x="244.5" y="153.5">EUR/CHF</text><text class="p" x="289.5" y="153.5">EUR/JPY</text><text class="p" x="334.5" y="153.5">GBP/AUD</text><text class="p" x="379" y="153.5">GBP/JPY</text><text class="p" x="425" y="153.5">NZD/JPY</text><text class="p" x="471.5" y="153.5">USD/CAD</text><text class="p" x="518" y="153.5" style="fill:#fff;font-weight:bold">USD/JPY</text>
<text class="p" x="60" y="173.5">AUD/CHF</text><text class="p" x="106.5" y="173.5">AUD/NZD</text><text class="p" x="153" y="173.5">CAD/JPY</text><text class="p" x="199.5" y="173.5">EUR/CAD</text><text class="p" x="244.5" y="173.5">EUR/GBP</text><text class="p" x="289.5" y="173.5">EUR/USD</text><text class="p" x="334.5" y="173.5">GBP/CHF</text><text class="p" x="379" y="173.5">GBP/NZD</text><text class="p" x="425" y="173.5">NZD/USD</text><text class="p" x="471.5" y="173.5">USD/CHF</text><text class="p" x="518" y="173.5">BTC/USDT</text>
<path d="M549.5 157l1.800 4 4.200.4-3.200 2.800 1 4.200-3.800-2.300-3.800 2.300 1-4.200-3.200-2.800 4.200-.4z" fill="#f5a623"/>
<text x="567" y="145" font-size="9" fill="#777" textLength="24" lengthAdjust="spacingAndGlyphs">Сумма</text><text x="617" y="145" font-size="9" fill="#777" textLength="24" lengthAdjust="spacingAndGlyphs">Время</text>
<circle cx="603" cy="145" r="5.5" fill="none" stroke="#444"/><text x="603" y="145" font-size="8" fill="#444" text-anchor="middle">i</text><circle cx="652" cy="145" r="5.5" fill="none" stroke="#444"/><text x="652" y="145" font-size="8" fill="#444" text-anchor="middle">i</text>
<text x="567" y="162" font-size="10" fill="#222">$</text><text x="590" y="162" font-size="10" fill="#222" text-anchor="middle">3</text><text x="640" y="162" font-size="10" fill="#222" text-anchor="middle">1</text>
<path d="M567 173.5h44M617 173.5h44M590.5 174v12M640.5 174v12" stroke="#666" fill="none"/>
<path d="M574 179h8M595 179h8M599 175v8M625 179h8M645 179h8M649 175v8" stroke="#666" fill="none"/>
<text x="667" y="160" font-size="11" font-weight="bold" fill="#f5a623" textLength="57" lengthAdjust="spacingAndGlyphs">10 102,42 $</text>
<path d="M0 186.5h733" stroke="#ddd"/>
<!-- tv toolbar -->
<path d="M0 212.5h519" stroke="#e8e8e8" stroke-width="3"/>
<path d="M172.5 190v22M245.5 186v26M287.5 186v26M347.5 186v26M436.5 186v26M462.5 186v26M488.5 186v26" stroke="#e8e8e8" fill="none"/>
<g fill="none" stroke="#777"><circle cx="21" cy="202" r="2.5"/><circle cx="31" cy="202" r="2.5"/><circle cx="26" cy="198" r="2.5"/><path d="M2 196v6"/><path d="M94 203c3-5 5-4 7-1s3 0 5-3"/><path d="M179 203l4-4 3 2 6-5M179 206l4-3 3 2 6-5M180 208h12"/><path d="M254 199h7c4 0 4 6 0 6M254 199l3-3M254 199l3 3"/><path d="M280 199h-7c-4 0-4 6 0 6M280 199l-3-3M280 199l-3 3" stroke="#ccc"/><path d="M355 205c-3 0-3-5 1-5 1-5 9-5 10-1 4 0 4 6 0 6z" stroke-dasharray="2 2"/><path d="M427 198l2.5 3 2.500-3"/><circle cx="449" cy="199" r="5.5" stroke-dasharray="2 1"/><circle cx="449" cy="199" r="2"/><path d="M471 195h3l-3 3zM480 195h-3l3 3zM471 205h3l-3-3zM480 205h-3l3-3z"/><rect x="497" y="195" width="12" height="10"/><circle cx="503" cy="200" r="2.5"/></g>
<text class="tv" x="39" y="200" textLength="40" lengthAdjust="spacingAndGlyphs">Сравнить</text><text class="tv" x="112" y="200" textLength="53" lengthAdjust="spacingAndGlyphs">Индикаторы</text><text class="tv" x="198" y="200" textLength="40" lengthAdjust="spacingAndGlyphs">Шаблоны</text><text class="tv" x="374" y="200" textLength="44" lengthAdjust="spacingAndGlyphs">Сохранить</text>
<!-- tv chart grid -->
<rect x="0" y="214" width="485" height="507" fill="#fff"/>
<path stroke="#e9eff3" fill="none" d="M0 257.5h485M0 291.5h485M0 325.5h485M0 359.5h485M0 393.5h485M0 427.5h485M0 460.5h485M0 494.5h485M0 528.5h485M0 562.5h485M0 596.5h485M0 630.5h485M0 664.5h485M0 697.5h485M62.5 214v507M126.5 214v507M190.5 214v507M253.5 214v507M305.5 214v507M381.5 214v507M445.5 214v507"/>
<path d="M485.5 214v507" stroke="#ccc" stroke-width="2"/><path d="M0 721.5h486" stroke="#ccc"/>
<!-- wicks -->
<path fill="none" stroke="#efb8be" d="M11.5 301V410M49.5 257V303M62.5 245V522M75.5 323V471M100.5 297V504M126.5 352V480M138.5 438V550M163.5 247V391M190.5 284V453M202.5 428V569M215.5 503V665M291.5 453V552M304.5 508V619M317.5 599V655"/>
<path fill="none" stroke="#b5dfca" d="M24.5 240V370M36.5 245V291M88.5 320V483M113.5 397V456M151.5 268V528M177.5 274V382M227.5 630V693M240.5 606V667M253.5 566V643M265.5 565V608M278.5 456V606"/>
<path fill="none" stroke="#eb4d5c" stroke-width="9" d="M11.5 318V361M49.5 260V290M62 289V337M75.5 337V416M100.5 323V441M126 416V473M138.5 472V493M163.5 271V354M190 284V437M202.5 437V513M215.5 513V659M291.5 457V512M304.5 511V600M317 599V623"/>
<path fill="none" stroke="#53b987" stroke-width="9" d="M-1.5 318V366M24 274V361M36.5 260V275M88 323V416M113.5 416V441M151.5 271V493M177.5 284V354M227.5 655V659M240.5 630V656M253.5 585V631M265.5 582V586M278.5 457V583"/>
<path stroke="#f08a94" stroke-dasharray="1 1" d="M0 623.5h486"/>
<path stroke="#9fd8bb" stroke-dasharray="4 3" d="M0 637.5h415M459 637.5h27"/>
<path stroke="#1f9254" stroke-dasharray="4 3" d="M0 653.5h415M459 653.5h27"/>
<rect x="415.5" y="631.5" width="43" height="13" fill="#fff" stroke="#1f9254"/><rect x="441" y="631" width="18" height="14" fill="#1f9254"/>
<rect x="415.5" y="647.5" width="43" height="13" fill="#fff" stroke="#1f9254"/><rect x="441" y="647" width="18" height="14" fill="#1f9254"/>
<path d="M418.5 634v8M418.5 650v8" stroke="#1f9254" stroke-dasharray="1 2"/>
<g font-size="8" font-weight="bold"><text x="424" y="637.5" fill="#1f9254">Call</text><text x="424" y="653.5" fill="#1f9254">Call</text><text x="444" y="637.5" fill="#fff">3 $</text><text x="444" y="653.5" fill="#fff">3 $</text></g>
<text x="0" y="700" font-size="10.5" fill="#5eb4e8" textLength="87" lengthAdjust="spacingAndGlyphs">Chart by TradingView</text>
<!-- tv price axis -->
<text class="axt" x="489" y="223">149.380</text><text class="axt" x="489" y="257">149.370</text><text class="axt" x="489" y="291">149.360</text><text class="axt" x="489" y="325">149.350</text><text class="axt" x="489" y="359">149.340</text><text class="axt" x="489" y="393">149.330</text><text class="axt" x="489" y="427">149.320</text><text class="axt" x="489" y="461">149.310</text><text class="axt" x="489" y="495">149.300</text><text class="axt" x="489" y="529">149.290</text><text class="axt" x="489" y="563">149.280</text><text class="axt" x="489" y="597">149.270</text><text class="axt" x="489" y="698">149.240</text>
<path d="M486 223.5h3M486 257.5h3M486 291.5h3M486 325.5h3M486 359.5h3M486 393.5h3M486 427.5h3M486 461.5h3M486 495.5h3M486 529.5h3M486 563.5h3M486 597.5h3M486 698.5h3" stroke="#888"/>
<rect x="486" y="618" width="33" height="11" fill="#eb4d5c"/><text x="489" y="623.5" font-size="8.4" font-weight="bold" fill="#fff">149.262</text>
<rect x="496" y="629" width="23" height="12" fill="#eb4d5c"/><text x="498" y="635" font-size="8.4" font-weight="bold" fill="#fff">00:33</text>
<rect x="486" y="641" width="33" height="23" fill="#1f9254"/><text x="489" y="646" font-size="8.4" font-weight="bold" fill="#fff">149.258</text><text x="489" y="657.5" font-size="8.4" font-weight="bold" fill="#fff">149.253</text>
<!-- legend -->
<text x="-2" y="224" font-size="11" fill="#444" textLength="67" lengthAdjust="spacingAndGlyphs">JPY, 1, FXCM</text>
<text class="lg" x="83" y="224" textLength="24" lengthAdjust="spacingAndGlyphs">ОТКР</text><text class="lr" x="109" y="224" textLength="33" lengthAdjust="spacingAndGlyphs">149.311</text><text class="lg" x="149" y="224" textLength="25" lengthAdjust="spacingAndGlyphs">МАКС</text><text class="lr" x="176" y="224" textLength="33" lengthAdjust="spacingAndGlyphs">149.312</text><text class="lg" x="216" y="224" textLength="20" lengthAdjust="spacingAndGlyphs">МИН</text><text class="lr" x="238" y="224" textLength="34" lengthAdjust="spacingAndGlyphs">149.283</text><text class="lg" x="279" y="224" textLength="22" lengthAdjust="spacingAndGlyphs">ЗАКР</text><text class="lr" x="303" y="224" textLength="34" lengthAdjust="spacingAndGlyphs">149.295</text><text class="lr" x="345" y="224" textLength="69" lengthAdjust="spacingAndGlyphs">−0.016 (−0.01%)</text>
<!-- time axis -->
<text class="tm" x="4" y="730">55</text><text class="tm" x="62" y="730">09:00</text><text class="tm" x="126" y="730">09:05</text><text class="tm" x="190" y="730">09:10</text><text class="tm" x="253" y="730">09:15</text><text class="tm" x="305" y="730">09:19</text><text class="tm" x="381" y="730">09:25</text><text class="tm" x="445" y="730">09:30</text>
<path d="M62.5 721v4M126.5 721v4M190.5 721v4M253.5 721v4M305.5 721v4M381.5 721v4M445.5 721v4" stroke="#888"/>
<path d="M0 738.5h519" stroke="#e8e8e8"/>
<text class="tp" x="12" y="750" font-weight="bold">5д</text><text class="tp" x="32" y="750" font-weight="bold">1д</text>
<text x="340" y="750" font-size="10" fill="#666" textLength="68" lengthAdjust="spacingAndGlyphs">09:20:26 (UTC+3)</text>
<path d="M417.5 741v17" stroke="#e8e8e8"/>
<text x="426" y="750" font-size="11" fill="#888">%</text><text x="445" y="750" font-size="10" fill="#555">лог</text><text x="470" y="750" font-size="10" fill="#2f86d8">авто</text>
<circle cx="504" cy="750" r="3.5" fill="none" stroke="#444" stroke-width="2"/><circle cx="504" cy="750" r="5" fill="none" stroke="#444" stroke-width="1.5" stroke-dasharray="1.500 1.500"/>
<path d="M0 760.5h519" stroke="#e0e0e0" stroke-width="2"/>
<rect x="519" y="213" width="3" height="548" fill="#eee"/>
<rect x="732" y="192" width="2" height="568" fill="#555"/>
<!-- right panel trade -->
<rect x="533" y="204" width="112" height="38" fill="#ff9800"/>
<text x="540" y="224" font-size="10.5" font-weight="bold" fill="#fff" textLength="48" lengthAdjust="spacingAndGlyphs">Прибыль:</text>
<text x="593" y="224" font-size="22" font-weight="bold" fill="#fff" textLength="45" lengthAdjust="spacingAndGlyphs">82%</text>
<circle cx="661" cy="208" r="5" fill="none" stroke="#333"/><text x="661" y="208" font-size="8" fill="#333" text-anchor="middle">i</text>
<text x="671" y="209" font-size="10.5" fill="#555" textLength="42" lengthAdjust="spacingAndGlyphs">Выплата:</text><text x="655" y="221" font-size="10.5" fill="#555" textLength="27" lengthAdjust="spacingAndGlyphs">5.46 $</text><text x="655" y="239" font-size="10.5" fill="#555" textLength="63" lengthAdjust="spacingAndGlyphs">Доход: 2.46 $</text>
<text x="627" y="273.5" font-size="15" fill="#111" text-anchor="middle">149.262</text>
<rect x="532" y="293" width="92" height="42" fill="#1f9254"/><rect x="630" y="293" width="92" height="42" fill="#eb5558"/>
<circle cx="552.5" cy="314" r="12.5" fill="none" stroke="#fff"/><path d="M548 316l4.5-4 4.500 4" fill="none" stroke="#fff"/>
<circle cx="651" cy="314" r="12.5" fill="none" stroke="#fff"/><path d="M647 312l4 4 4-4" fill="none" stroke="#fff"/>
<text x="572" y="315" font-size="23" font-weight="bold" fill="#fff" textLength="42" lengthAdjust="spacingAndGlyphs">Call</text>
<text x="673" y="315" font-size="23" font-weight="bold" fill="#fff" textLength="36" lengthAdjust="spacingAndGlyphs">Put</text>
<rect x="533.5" y="348.5" width="186" height="20" rx="1" fill="#ffc168" stroke="#f5b555"/>
<text x="578.5" y="359" font-size="12" fill="#111" textLength="97" lengthAdjust="spacingAndGlyphs">Отложенный ордер</text>
<text x="591" y="388" font-size="10" fill="#222" textLength="45" lengthAdjust="spacingAndGlyphs">Открытые</text><text x="645" y="388" font-size="10" fill="#333" textLength="45" lengthAdjust="spacingAndGlyphs">Закрытые</text>
<path d="M591 395.5h45" stroke="#f0d850"/>
<path d="M559.5 403v88M644.5 403v88M684.5 403v88" stroke="#777" fill="none"/><path d="M528 446.5h197M528 490.5h197" stroke="#888" fill="none"/>
<g fill="none" stroke="#1f9254"><circle cx="543" cy="424.5" r="9"/><path d="M539 426.5l4-3.500 4 3.500"/><circle cx="543" cy="468.5" r="9"/><path d="M539 470.5l4-3.500 4 3.500"/></g>
<text class="tt" x="601.5" y="413">212386665</text><text class="tt" x="601.5" y="424.5" textLength="78" lengthAdjust="spacingAndGlyphs">09:20:13, 16 Oct 24</text><text class="tt" x="601.5" y="435.5" textLength="76" lengthAdjust="spacingAndGlyphs">09:21:13, 16 Oct 24</text><text class="tt" x="664" y="413" textLength="36" lengthAdjust="spacingAndGlyphs">USD/JPY</text><text class="tt" x="664" y="424.5">149.258</text><text class="tt" x="664" y="435.5" style="fill:#4caf50;font-weight:bold">149.26</text><text class="tt" x="705" y="424.5">3 $</text><text class="tt" x="705" y="435.5">00:00:47</text>
<text class="tt" x="601.5" y="457">212386664</text><text class="tt" x="601.5" y="468.5" textLength="79" lengthAdjust="spacingAndGlyphs">09:20:10, 16 Oct 24</text><text class="tt" x="601.5" y="479.5" textLength="76" lengthAdjust="spacingAndGlyphs">09:21:10, 16 Oct 24</text><text class="tt" x="664" y="457" textLength="36" lengthAdjust="spacingAndGlyphs">USD/JPY</text><text class="tt" x="664" y="468.5">149.253</text><text class="tt" x="664" y="479.5" style="fill:#4caf50;font-weight:bold">149.26</text><text class="tt" x="705" y="468.5">3 $</text><text class="tt" x="705" y="479.5">00:00:44</text>
<!-- alert window -->
<rect x="3" y="798" width="450" height="29" fill="#fff"/><path d="M3 798.5h450M453.5 798v29M3.5 798v29" stroke="#bbb" fill="none"/>
<path d="M15 819c2-1 1-9 5-10 4 1 3 9 5 10z" fill="#f5c518"/><circle cx="20" cy="807" r="1.2" fill="#f5c518"/><circle cx="20" cy="820" r="1.5" fill="#e8a800"/>
<text x="32" y="814" font-size="14" fill="#888" textLength="33" lengthAdjust="spacingAndGlyphs">Алерт</text>
<path d="M334 813h10" stroke="#888"/><rect x="379.5" y="808.5" width="9" height="9" fill="none" stroke="#ddd"/><path d="M425 808l10 10M435 808l-10 10" stroke="#666" fill="none"/>
</svg>
</body></html>
